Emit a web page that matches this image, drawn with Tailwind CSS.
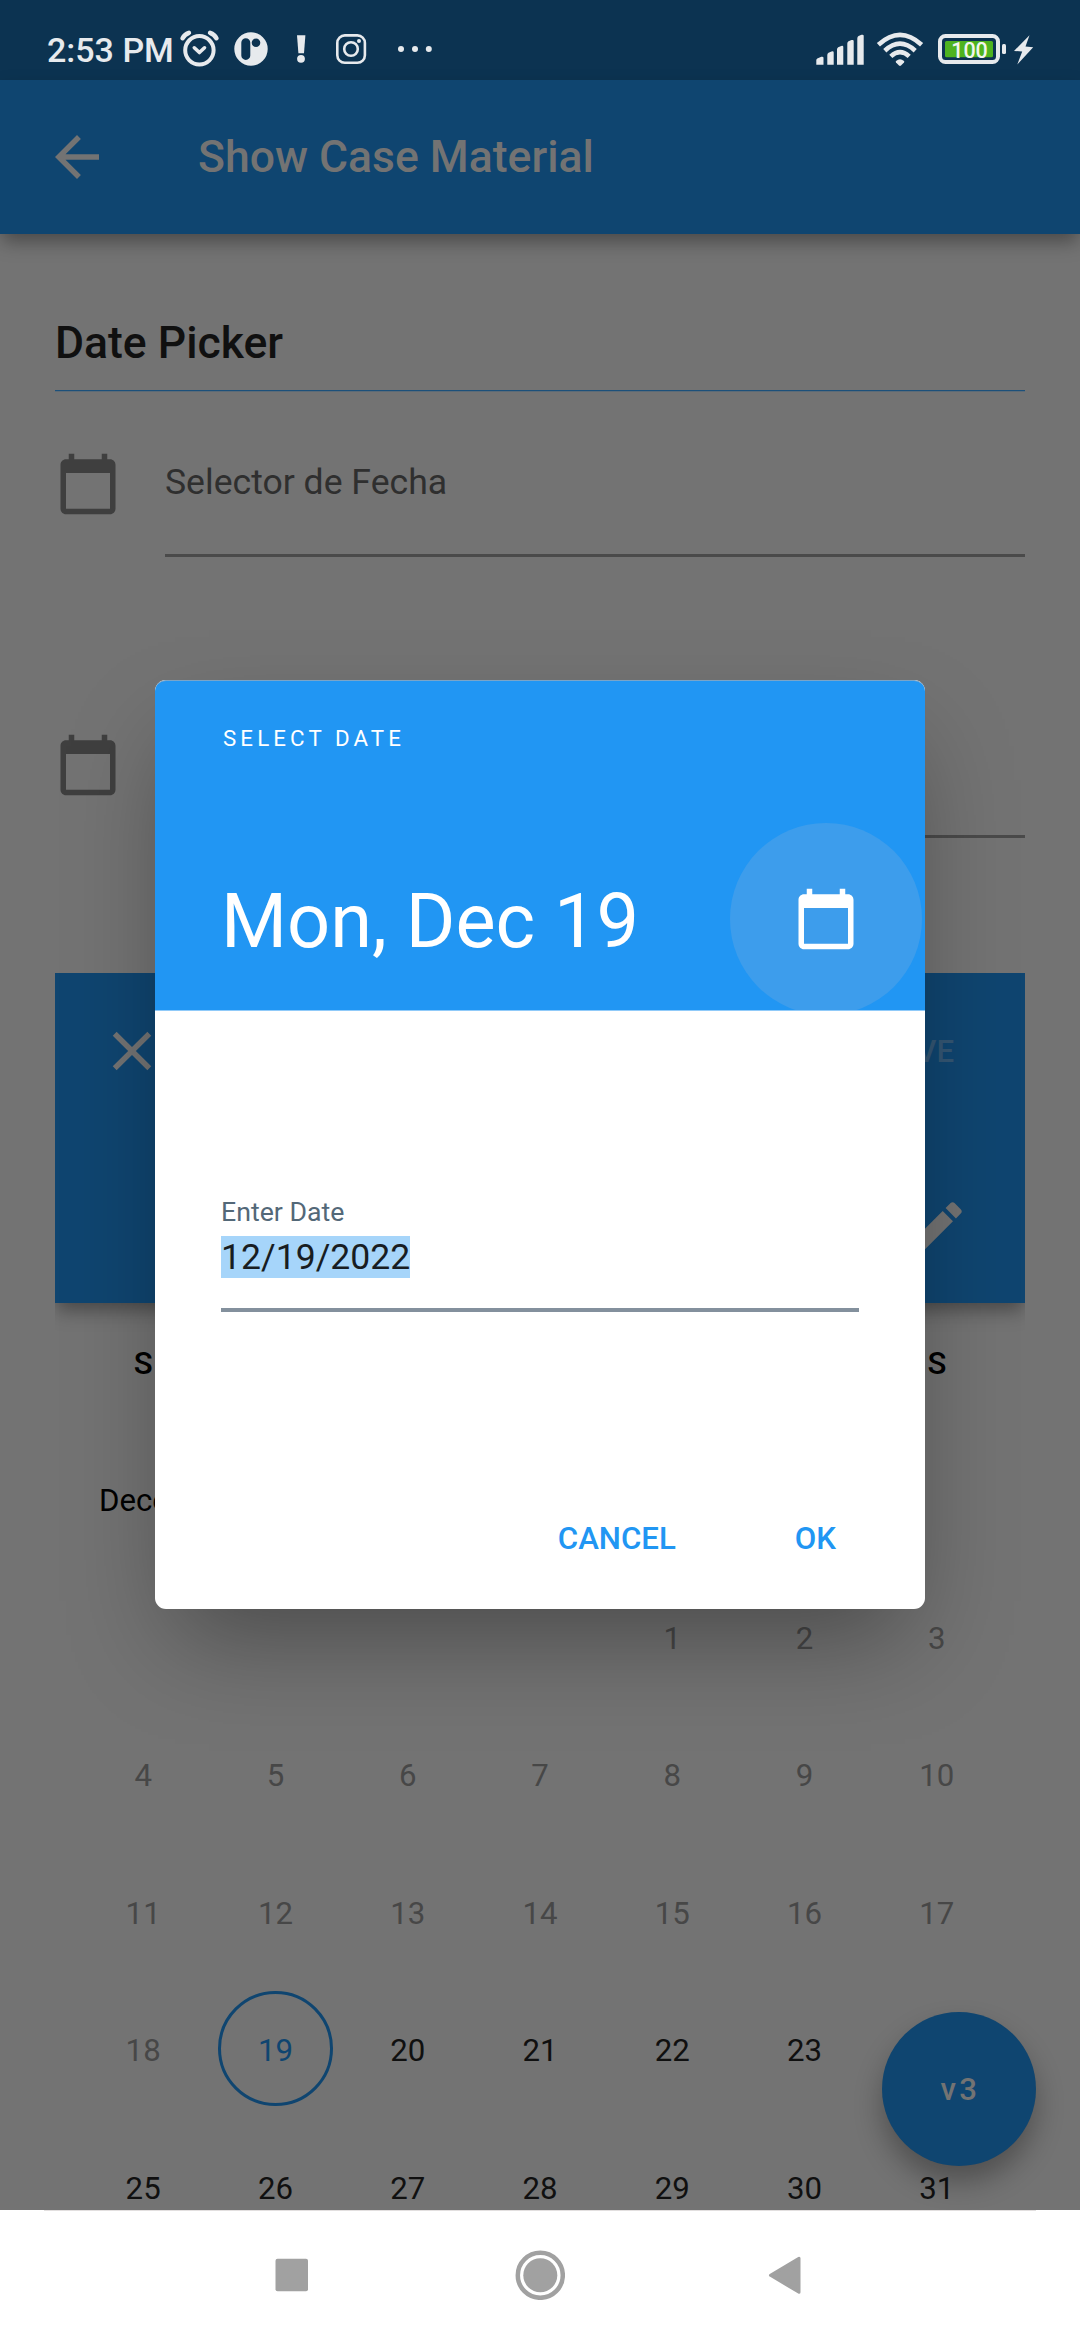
<!DOCTYPE html>
<html lang="en">
<head>
<meta charset="utf-8">
<meta name="viewport" content="width=1080">
<title>Show Case Material</title>
<script src="https://cdn.jsdelivr.net/npm/@tailwindcss/browser@4"></script>
</head>
<body class="relative flex h-[2340px] w-[1080px] flex-col overflow-hidden bg-[#737373] font-['Roboto',sans-serif] text-[31.2px] leading-[36px]">

<!-- System status bar -->
<header class="flex h-20 shrink-0 bg-[#0c3351] pt-6 text-[#e7eaed]">
  <span class="ml-[47px] mt-px w-[123px] whitespace-nowrap text-[34px] leading-[50px] font-medium">2:53 PM</span>
  <svg class="h-[50px] w-[270px] shrink-0" viewBox="170 24 270 50" fill="none" stroke="#e7eaed">
    <circle cx="199.4" cy="50.3" r="14.2" stroke-width="4"/>
    <path d="M182.6 38.2q2-3.8 6.3-5.4M216.4 38.2q-2-3.8-6.3-5.4" stroke-width="4.6" stroke-linecap="round"/>
    <path d="M194.3 47.8l5.1 4.7 5.1-4.7" stroke-width="3.6" stroke-linecap="round" stroke-linejoin="round"/>
    <g stroke="none" fill="#e7eaed">
      <path fill-rule="evenodd" d="M251 32.3a16.7 16.7 0 1 1 0 33.4a16.7 16.7 0 1 1 0-33.4zM245.8 38.3a4.5 4.5 0 0 0-4.5 4.5v12.6a4.5 4.5 0 0 0 9 0V42.8a4.5 4.5 0 0 0-4.5-4.5zM256 38.4a4.3 4.3 0 1 0 0 8.6a4.3 4.3 0 0 0 0-8.6z"/>
      <path d="M297 35.3h8.4l-1.4 18h-5.6z"/>
      <circle cx="301" cy="58.8" r="3.9"/>
      <circle cx="359" cy="41" r="2"/>
      <circle cx="401" cy="49" r="3"/><circle cx="415" cy="49" r="3"/><circle cx="428.8" cy="49" r="3"/>
    </g>
    <rect x="337.3" y="35.4" width="27.6" height="27.4" rx="7.5" stroke-width="2.6"/>
    <circle cx="351" cy="49" r="6.8" stroke-width="2.6"/>
  </svg>
  <svg class="ml-auto mr-[35px] h-[50px] w-[240px] shrink-0" viewBox="805 24 240 50" fill="#e7eaed">
    <path d="M816.3 64.7v-4.5q0-1 1-1.7l4-1.7q2.2-.4 2.2 1v6.9zM827.3 64.7V55q0-1.5 1.2-2.2l3-1.4q2.2-.6 2.2 1v12.3zM837 64.7V49.5q0-1.5 1.2-2.2l3-1.4q2.1-.6 2.1 1v17.8zM847.3 64.7V43.5q0-1.5 1.2-2.2l3-1.2q2.2-.6 2.2 1v23.6zM857.3 64.7V38.5q0-1.8 1.2-2.5l3-1.2q2.2-.6 2.2 1v28.9z"/>
    <g fill="none" stroke="#e7eaed" stroke-width="4.6">
      <path d="M878.4 44.8Q900 25 921.6 44.8"/>
      <path d="M884.8 50.8Q900 36.6 915.2 50.8"/>
      <path d="M890.8 56.4Q900 48 909.2 56.4"/>
    </g>
    <path d="M896 61q4-3.6 8 0q.6.8 0 1.500l-3 3q-1 .8-2 0l-3-3q-.6-.7 0-1.500z"/>
    <rect x="940" y="36" width="58" height="26" rx="5.5" fill="none" stroke="#e7eaed" stroke-width="4"/>
    <rect x="945" y="41" width="48" height="16.3" rx="1.5" fill="#4eb31f"/>
    <rect x="1002" y="44" width="4" height="10" rx="1.5"/>
    <path d="M1029.5 35.3L1014 50.9l8.2.6-4.9 12.9L1033.2 47.3l-7.7-.8z"/>
    <text x="969.5" y="57.8" text-anchor="middle" font-size="21.5" font-weight="500" fill="#f2f6ee">100</text>
  </svg>
</header>

<!-- App bar -->
<nav class="relative flex h-[154px] shrink-0 items-center bg-[#0f4570] pl-11 text-[#737373] shadow-[0_9px_18px_-2px_rgb(0_0_0/0.38)]">
  <svg class="size-[66px]" viewBox="0 0 24 24" fill="currentColor"><path d="M20 11H7.83l5.59-5.59L12 4l-8 8 8 8 1.41-1.41L7.83 13H20v-2z"/></svg>
  <h1 class="ml-[88px] text-[44.5px] leading-[52px] font-medium">Show Case Material</h1>
</nav>

<main class="flex min-h-0 flex-1 flex-col overflow-hidden px-[55px]">
  <h2 class="mt-[83px] h-[73px] shrink-0 text-[44.5px] leading-[52px] font-medium text-[#101010]">Date Picker</h2>
  <div class="h-0.5 shrink-0 border-b border-[#5c6b77] bg-[#1c507a]"></div>

  <div class="mt-[59px] flex shrink-0 gap-11">
    <svg class="size-[66px]" viewBox="0 0 24 24" fill="#3f3f3f"><path d="M20 3h-1V1h-2v2H7V1H5v2H4c-1.1 0-2 .9-2 2v16c0 1.1.9 2 2 2h16c1.1 0 2-.9 2-2V5c0-1.1-.9-2-2-2zm0 18H4V8h16v13z"/></svg>
    <div class="h-[106px] flex-1 border-b-[3px] border-[#4a4a4a] pt-[9.5px] text-[35.6px] leading-[42px] text-[#2f2f2f]">Selector de Fecha</div>
  </div>

  <div class="mt-[175px] flex shrink-0 gap-11">
    <svg class="size-[66px]" viewBox="0 0 24 24" fill="#3f3f3f"><path d="M20 3h-1V1h-2v2H7V1H5v2H4c-1.1 0-2 .9-2 2v16c0 1.1.9 2 2 2h16c1.1 0 2-.9 2-2V5c0-1.1-.9-2-2-2zm0 18H4V8h16v13z"/></svg>
    <div class="h-[106px] flex-1 border-b-[3px] border-[#4a4a4a]"></div>
  </div>

  <!-- Inline range calendar -->
  <section class="mt-[135px] flex shrink-0 flex-col">
    <div class="relative flex h-[330px] shrink-0 flex-col justify-between bg-[#0f4570] pt-[45px] pr-[55px] pb-[43px] pl-11 text-[#737373] shadow-[0_9px_18px_-2px_rgb(0_0_0/0.38)] [clip-path:inset(0_0_-40px_0)]">
      <div class="flex items-center justify-between">
        <svg class="size-[66px]" viewBox="0 0 24 24" fill="currentColor"><path d="M19 6.41L17.59 5 12 10.59 6.41 5 5 6.41 10.59 12 5 17.59 6.41 19 12 13.41 17.59 19 19 17.59 13.41 12z"/></svg>
        <span class="mr-4 pt-0.5 font-medium text-[#345673]">SAVE</span>
      </div>
      <svg class="size-[66px] self-end" viewBox="0 0 24 24" fill="currentColor"><path d="M3 17.25V21h3.75L17.81 9.94l-3.75-3.75L3 17.25zM20.71 7.04c.39-.39.39-1.02 0-1.41l-2.34-2.34c-.39-.39-1.02-.39-1.41 0l-1.83 1.83 3.75 3.75 1.83-1.83z"/></svg>
    </div>
    <div class="grid h-[121px] grid-cols-7 items-center px-[22px] text-center font-medium text-black">
      <span>S</span><span>M</span><span>T</span><span>W</span><span>T</span><span>F</span><span>S</span>
    </div>
    <div class="mt-2 flex h-[138px] items-center pl-11 text-black">December 2022</div>
    <div class="grid auto-rows-[137.5px] grid-cols-7 items-center px-[22px] text-center text-[#101010]">
      <span class="col-start-5 text-[#474747]">1</span><span class="text-[#474747]">2</span><span class="text-[#474747]">3</span>
      <span class="text-[#474747]">4</span><span class="text-[#474747]">5</span><span class="text-[#474747]">6</span><span class="text-[#474747]">7</span><span class="text-[#474747]">8</span><span class="text-[#474747]">9</span><span class="text-[#474747]">10</span>
      <span class="text-[#474747]">11</span><span class="text-[#474747]">12</span><span class="text-[#474747]">13</span><span class="text-[#474747]">14</span><span class="text-[#474747]">15</span><span class="text-[#474747]">16</span><span class="text-[#474747]">17</span>
      <span class="text-[#474747]">18</span>
      <span class="relative text-[#0f4570]">19<i class="absolute top-1/2 left-1/2 -mt-[60px] -ml-[57.5px] size-[115px] rounded-full border-[3px] border-[#0f4570]"></i></span>
      <span>20</span><span>21</span><span>22</span><span>23</span><span>24</span>
      <span>25</span><span>26</span><span>27</span><span>28</span><span>29</span><span>30</span><span>31</span>
    </div>
  </section>
</main>

<!-- Floating action button -->
<button class="absolute top-[2012px] left-[882px] flex size-[154px] items-center justify-center rounded-full bg-[#0f4570] pt-0.5 pl-[3px] font-medium tracking-[3.3px] text-[#737373] shadow-[0_16px_28px_rgb(0_0_0/0.3)]">v3</button>

<!-- Date dialog -->
<div class="absolute inset-x-0 top-20 bottom-[130px] flex items-start justify-center pt-[600px]">
  <section role="dialog" class="flex h-[929px] w-[770px] flex-col overflow-hidden rounded-[11px] bg-white shadow-[0_46px_96px_-20px_rgb(0_0_0/0.36)]">
    <div class="flex h-[331px] shrink-0 flex-col overflow-hidden rounded-t-[11px] border-t border-b border-t-[#7ba5c8] border-b-[#90caf9] bg-[#2196f3] pt-[43px] pl-[66px] text-white">
      <p class="pl-0.5 text-[22.3px] leading-7 tracking-[4.125px]">SELECT DATE</p>
      <div class="mt-[82px] flex h-[174px] items-center justify-between">
        <h3 class="text-[75.7px] leading-[90px]">Mon, Dec 19</h3>
        <div class="mr-[3px] mb-1 flex size-48 shrink-0 items-center justify-center rounded-full bg-[#3d9dec]">
          <svg class="size-[66px]" viewBox="0 0 24 24" fill="currentColor"><path d="M20 3h-1V1h-2v2H7V1H5v2H4c-1.1 0-2 .9-2 2v16c0 1.1.9 2 2 2h16c1.1 0 2-.9 2-2V5c0-1.1-.9-2-2-2zm0 18H4V8h16v13z"/></svg>
        </div>
      </div>
    </div>
    <div class="flex flex-1 flex-col px-[66px] pt-[185px]">
      <label class="text-[26.7px] leading-8 text-[#536878]">Enter Date</label>
      <div class="mt-2 h-[76px] border-b-4 border-[#83909d] text-[35.6px] leading-[42px] text-[#181d22]"><span class="inline-block h-[42px] bg-[#a6d5fa]">12/19/2022</span></div>
      <div class="mt-[209px] flex justify-end gap-[119px] pr-[23px] font-medium text-[#2196f3]">
        <button>CANCEL</button><button>OK</button>
      </div>
    </div>
  </section>
</div>

<!-- System navigation bar -->
<footer class="relative flex h-[130px] shrink-0 items-center justify-center gap-[201px] bg-white">
  <div class="absolute inset-x-11 top-0 h-px bg-[#e2dfdf]"></div>
  <svg class="size-[50px]" viewBox="0 0 50 50" fill="#a1a1a1"><rect x="7.5" y="8.7" width="32.5" height="32.5" rx="2"/></svg>
  <svg class="-mx-1 size-[50px]" viewBox="0 0 50 50" fill="#a1a1a1"><circle cx="25.3" cy="25.3" r="17"/><circle cx="25.3" cy="25.3" r="22.5" fill="none" stroke="#a1a1a1" stroke-width="4.5"/></svg>
  <svg class="size-[50px]" viewBox="0 0 50 50" fill="#a1a1a1" stroke="#a1a1a1" stroke-width="3" stroke-linejoin="round"><path d="M8.5 25.3L37 8.3V42.3z"/></svg>
</footer>
</body>
</html>
